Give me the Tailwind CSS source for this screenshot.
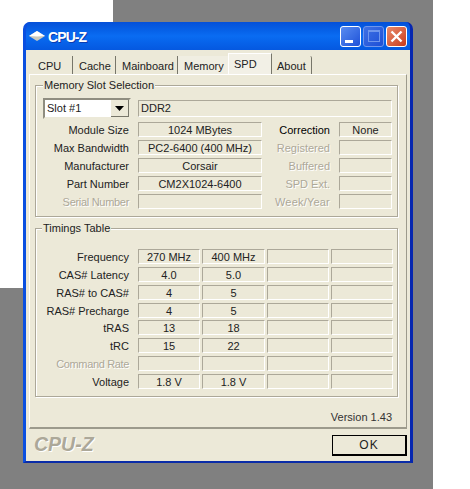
<!DOCTYPE html>
<html>
<head>
<meta charset="utf-8">
<script src="https://cdn.jsdelivr.net/npm/@tailwindcss/browser@4"></script>
</head>
<body class="bg-white overflow-hidden font-['Liberation_Sans',Arial,sans-serif] text-[11px] leading-[13px] text-[#222]">
<div class="relative w-[470px] h-[489px] overflow-hidden">
  <div class="absolute left-[113px] top-0 w-[320px] h-[489px] bg-[#808080]"></div>
  <div class="absolute left-0 top-[288px] w-[113px] h-[201px] bg-[#808080]"></div>

  <div class="absolute left-[23px] top-[22px] w-[390px] h-[441px] flex flex-col rounded-t-[7px] overflow-hidden bg-[#0831d9] border-r-[3px] border-b-2 border-l-[3px] border-r-[#0626b0] border-b-[#0a2ca8] border-l-[#0a4fe0]">
    <div class="h-[28px] -mx-[3px] shrink-0 flex items-center bg-gradient-to-b from-[#0550d8] via-[#0a6cf2] to-[#0558e0] pl-[6px] pr-[6px]">
      <svg width="16" height="10" viewBox="0 0 16 10" class="mr-[3px]">
        <path d="M8 0 L16 5 L8 10 L0 5 Z" fill="#c9c9bd"/>
        <path d="M8 0 L16 5 L8 5.5 L0 5 Z" fill="#ffffff"/>
      </svg>
      <span class="text-white font-bold text-[14px] tracking-[-0.9px] pt-[3px] [text-shadow:1px_1px_0_#0a3cb0]">CPU-Z</span>
      <div class="ml-auto flex gap-[2px]">
        <div class="w-[21px] h-[21px] rounded-[3px] border border-white bg-gradient-to-br from-[#5a8cf0] to-[#1f50d8] flex items-end pl-[4px] pb-[3px]">
          <div class="w-[8px] h-[3px] bg-white"></div>
        </div>
        <div class="w-[21px] h-[21px] rounded-[3px] border border-[#6f96ec] bg-gradient-to-br from-[#3f70e4] to-[#1d4fd6] flex items-center justify-center">
          <div class="w-[12px] h-[12px] border border-[#6f96ec] border-t-2"></div>
        </div>
        <div class="w-[21px] h-[21px] rounded-[3px] border border-white bg-gradient-to-br from-[#e88a6a] to-[#c8391a] flex items-center justify-center">
          <svg width="13" height="13" viewBox="0 0 13 13"><path d="M1.5 1.5 L11.5 11.5 M11.5 1.5 L1.5 11.5" stroke="#fff" stroke-width="2.4"/></svg>
        </div>
      </div>
    </div>

    <div class="flex-1 bg-[#ece9d8] flex flex-col">
      <div class="h-[24px] pl-[5px] flex items-end shrink-0">
        <div class="w-[42px] h-[18px] flex items-center pl-[7px] pt-[2px] border-r border-[#77766a]">CPU</div>
        <div class="w-[43px] h-[18px] flex items-center pl-[6px] pt-[2px] border-r border-[#77766a]">Cache</div>
        <div class="w-[62px] h-[18px] flex items-center pl-[6px] pt-[2px] border-r border-[#77766a]">Mainboard</div>
        <div class="w-[50px] h-[18px] flex items-center pl-[6px] pt-[2px] bg-[#f0eee2]">Memory</div>
        <div class="w-[44px] h-[21px] flex items-start pt-[4px] pl-[5px] bg-[#f2f0e6] border-t border-l border-white border-r border-r-[#77766a]">SPD</div>
        <div class="w-[40px] h-[18px] flex items-center pl-[5px] pt-[2px] border-r border-[#77766a] rounded-tr-[2px]">About</div>
      </div>

      <div class="ml-[3px] w-[378px] h-[355px] shrink-0 border-t border-l border-t-white border-l-white border-r border-r-[#9c9a8c] border-b-2 border-b-[#9c9a8c]">
        <div class="relative ml-[5px] mt-[10px] w-[363px] h-[132px] border border-[#aca899] shadow-[inset_1px_1px_0_#fff,1px_1px_0_#fff] pt-[12px] pl-[7px]">
          <div class="absolute left-[7px] -top-[7px] bg-[#ece9d8] px-[1px]">Memory Slot Selection</div>
          <div class="flex items-center h-[21px]">
            <div class="w-[88px] h-[21px] bg-white border-2 border-t-[#8f8d80] border-l-[#8f8d80] border-r-[#ece9d8] border-b-[#ece9d8] flex items-center justify-between pl-[2px]">
              <span>Slot #1</span>
              <div class="w-[18px] h-[17px] bg-[#ece9d8] border-r border-b border-[#77766a] flex items-center justify-center">
                <svg width="9" height="5" viewBox="0 0 9 5"><path d="M0 0 H9 L4.5 5 Z" fill="#000"/></svg>
              </div>
            </div>
            <div class="ml-[7px] w-[254px] h-[17px] border border-t-[#aca899] border-l-[#aca899] border-r-white border-b-white flex items-center pl-[2px]">DDR2</div>
          </div>

          <div class="mt-[3px] flex flex-col gap-[3px]">
            <div class="flex h-[15px] items-center [&>div]:pt-[2px]">
              <div class="w-[86px] text-right">Module Size</div>
              <div class="ml-[9px] w-[124px] h-[15px] border border-t-[#aca899] border-l-[#aca899] border-r-white border-b-white flex items-center justify-center">1024 MBytes</div>
              <div class="w-[68px] text-right text-black">Correction</div>
              <div class="ml-[9px] w-[53px] h-[15px] border border-t-[#aca899] border-l-[#aca899] border-r-white border-b-white flex items-center justify-center">None</div>
            </div>
            <div class="flex h-[15px] items-center [&>div]:pt-[2px]">
              <div class="w-[86px] text-right">Max Bandwidth</div>
              <div class="ml-[9px] w-[124px] h-[15px] border border-t-[#aca899] border-l-[#aca899] border-r-white border-b-white flex items-center justify-center">PC2-6400 (400 MHz)</div>
              <div class="w-[68px] text-right text-[#aca899] [text-shadow:1px_1px_0_#fff]">Registered</div>
              <div class="ml-[9px] w-[53px] h-[15px] border border-t-[#aca899] border-l-[#aca899] border-r-white border-b-white"></div>
            </div>
            <div class="flex h-[15px] items-center [&>div]:pt-[2px]">
              <div class="w-[86px] text-right">Manufacturer</div>
              <div class="ml-[9px] w-[124px] h-[15px] border border-t-[#aca899] border-l-[#aca899] border-r-white border-b-white flex items-center justify-center">Corsair</div>
              <div class="w-[68px] text-right text-[#aca899] [text-shadow:1px_1px_0_#fff]">Buffered</div>
              <div class="ml-[9px] w-[53px] h-[15px] border border-t-[#aca899] border-l-[#aca899] border-r-white border-b-white"></div>
            </div>
            <div class="flex h-[15px] items-center [&>div]:pt-[2px]">
              <div class="w-[86px] text-right">Part Number</div>
              <div class="ml-[9px] w-[124px] h-[15px] border border-t-[#aca899] border-l-[#aca899] border-r-white border-b-white flex items-center justify-center">CM2X1024-6400</div>
              <div class="w-[68px] text-right text-[#aca899] [text-shadow:1px_1px_0_#fff]">SPD Ext.</div>
              <div class="ml-[9px] w-[53px] h-[15px] border border-t-[#aca899] border-l-[#aca899] border-r-white border-b-white"></div>
            </div>
            <div class="flex h-[15px] items-center [&>div]:pt-[2px]">
              <div class="w-[86px] text-right tracking-[-0.3px] text-[#aca899] [text-shadow:1px_1px_0_#fff]">Serial Number</div>
              <div class="ml-[9px] w-[124px] h-[15px] border border-t-[#aca899] border-l-[#aca899] border-r-white border-b-white"></div>
              <div class="w-[68px] text-right text-[#aca899] tracking-[0.2px] [text-shadow:1px_1px_0_#fff]">Week/Year</div>
              <div class="ml-[9px] w-[53px] h-[15px] border border-t-[#aca899] border-l-[#aca899] border-r-white border-b-white"></div>
            </div>
          </div>
        </div>

        <div class="relative ml-[5px] mt-[11px] w-[363px] h-[169px] border border-[#aca899] shadow-[inset_1px_1px_0_#fff,1px_1px_0_#fff] pt-[20px] pl-[7px]">
          <div class="absolute left-[6px] -top-[7px] bg-[#ece9d8] px-[1px]">Timings Table</div>
          <div class="flex flex-col gap-[2.86px]">
            <div class="flex h-[15px] items-center [&>div]:pt-[2px]">
              <div class="w-[86px] text-right mr-[9px]">Frequency</div>
              <div class="w-[62px] h-[15px] mr-[2px] border border-t-[#aca899] border-l-[#aca899] border-r-white border-b-white flex items-center justify-center">270 MHz</div>
              <div class="w-[63px] h-[15px] mr-[2px] border border-t-[#aca899] border-l-[#aca899] border-r-white border-b-white flex items-center justify-center">400 MHz</div>
              <div class="w-[62px] h-[15px] mr-[2px] border border-t-[#aca899] border-l-[#aca899] border-r-white border-b-white"></div>
              <div class="w-[62px] h-[15px] border border-t-[#aca899] border-l-[#aca899] border-r-white border-b-white"></div>
            </div>
            <div class="flex h-[15px] items-center [&>div]:pt-[2px]">
              <div class="w-[86px] text-right mr-[9px]">CAS# Latency</div>
              <div class="w-[62px] h-[15px] mr-[2px] border border-t-[#aca899] border-l-[#aca899] border-r-white border-b-white flex items-center justify-center">4.0</div>
              <div class="w-[63px] h-[15px] mr-[2px] border border-t-[#aca899] border-l-[#aca899] border-r-white border-b-white flex items-center justify-center">5.0</div>
              <div class="w-[62px] h-[15px] mr-[2px] border border-t-[#aca899] border-l-[#aca899] border-r-white border-b-white"></div>
              <div class="w-[62px] h-[15px] border border-t-[#aca899] border-l-[#aca899] border-r-white border-b-white"></div>
            </div>
            <div class="flex h-[15px] items-center [&>div]:pt-[2px]">
              <div class="w-[86px] text-right mr-[9px]">RAS# to CAS#</div>
              <div class="w-[62px] h-[15px] mr-[2px] border border-t-[#aca899] border-l-[#aca899] border-r-white border-b-white flex items-center justify-center">4</div>
              <div class="w-[63px] h-[15px] mr-[2px] border border-t-[#aca899] border-l-[#aca899] border-r-white border-b-white flex items-center justify-center">5</div>
              <div class="w-[62px] h-[15px] mr-[2px] border border-t-[#aca899] border-l-[#aca899] border-r-white border-b-white"></div>
              <div class="w-[62px] h-[15px] border border-t-[#aca899] border-l-[#aca899] border-r-white border-b-white"></div>
            </div>
            <div class="flex h-[15px] items-center [&>div]:pt-[2px]">
              <div class="w-[86px] text-right mr-[9px] whitespace-nowrap">RAS# Precharge</div>
              <div class="w-[62px] h-[15px] mr-[2px] border border-t-[#aca899] border-l-[#aca899] border-r-white border-b-white flex items-center justify-center">4</div>
              <div class="w-[63px] h-[15px] mr-[2px] border border-t-[#aca899] border-l-[#aca899] border-r-white border-b-white flex items-center justify-center">5</div>
              <div class="w-[62px] h-[15px] mr-[2px] border border-t-[#aca899] border-l-[#aca899] border-r-white border-b-white"></div>
              <div class="w-[62px] h-[15px] border border-t-[#aca899] border-l-[#aca899] border-r-white border-b-white"></div>
            </div>
            <div class="flex h-[15px] items-center [&>div]:pt-[2px]">
              <div class="w-[86px] text-right mr-[9px]">tRAS</div>
              <div class="w-[62px] h-[15px] mr-[2px] border border-t-[#aca899] border-l-[#aca899] border-r-white border-b-white flex items-center justify-center">13</div>
              <div class="w-[63px] h-[15px] mr-[2px] border border-t-[#aca899] border-l-[#aca899] border-r-white border-b-white flex items-center justify-center">18</div>
              <div class="w-[62px] h-[15px] mr-[2px] border border-t-[#aca899] border-l-[#aca899] border-r-white border-b-white"></div>
              <div class="w-[62px] h-[15px] border border-t-[#aca899] border-l-[#aca899] border-r-white border-b-white"></div>
            </div>
            <div class="flex h-[15px] items-center [&>div]:pt-[2px]">
              <div class="w-[86px] text-right mr-[9px]">tRC</div>
              <div class="w-[62px] h-[15px] mr-[2px] border border-t-[#aca899] border-l-[#aca899] border-r-white border-b-white flex items-center justify-center">15</div>
              <div class="w-[63px] h-[15px] mr-[2px] border border-t-[#aca899] border-l-[#aca899] border-r-white border-b-white flex items-center justify-center">22</div>
              <div class="w-[62px] h-[15px] mr-[2px] border border-t-[#aca899] border-l-[#aca899] border-r-white border-b-white"></div>
              <div class="w-[62px] h-[15px] border border-t-[#aca899] border-l-[#aca899] border-r-white border-b-white"></div>
            </div>
            <div class="flex h-[15px] items-center [&>div]:pt-[2px]">
              <div class="w-[86px] text-right mr-[9px] whitespace-nowrap tracking-[-0.35px] text-[#aca899] [text-shadow:1px_1px_0_#fff]">Command Rate</div>
              <div class="w-[62px] h-[15px] mr-[2px] border border-t-[#aca899] border-l-[#aca899] border-r-white border-b-white"></div>
              <div class="w-[63px] h-[15px] mr-[2px] border border-t-[#aca899] border-l-[#aca899] border-r-white border-b-white"></div>
              <div class="w-[62px] h-[15px] mr-[2px] border border-t-[#aca899] border-l-[#aca899] border-r-white border-b-white"></div>
              <div class="w-[62px] h-[15px] border border-t-[#aca899] border-l-[#aca899] border-r-white border-b-white"></div>
            </div>
            <div class="flex h-[15px] items-center [&>div]:pt-[2px]">
              <div class="w-[86px] text-right mr-[9px]">Voltage</div>
              <div class="w-[62px] h-[15px] mr-[2px] border border-t-[#aca899] border-l-[#aca899] border-r-white border-b-white flex items-center justify-center">1.8 V</div>
              <div class="w-[63px] h-[15px] mr-[2px] border border-t-[#aca899] border-l-[#aca899] border-r-white border-b-white flex items-center justify-center">1.8 V</div>
              <div class="w-[62px] h-[15px] mr-[2px] border border-t-[#aca899] border-l-[#aca899] border-r-white border-b-white"></div>
              <div class="w-[62px] h-[15px] border border-t-[#aca899] border-l-[#aca899] border-r-white border-b-white"></div>
            </div>
          </div>
        </div>

        <div class="mt-[14px] pr-[14px] text-right text-[#333]">Version 1.43</div>
      </div>

      <div class="flex-1 flex items-start justify-between pl-[8px] pr-[3px] pt-[6px]">
        <span class="-mt-[2px] font-bold italic text-[19.5px] leading-[22px] text-[#aca899] [text-shadow:1px_1px_0_#fff]">CPU-Z</span>
        <div class="w-[75px] h-[21px] border border-black border-r-2 border-b-2 flex items-center justify-center text-[#222] text-[12px] tracking-[1px]">OK</div>
      </div>
    </div>
  </div>
</div>
</body>
</html>
